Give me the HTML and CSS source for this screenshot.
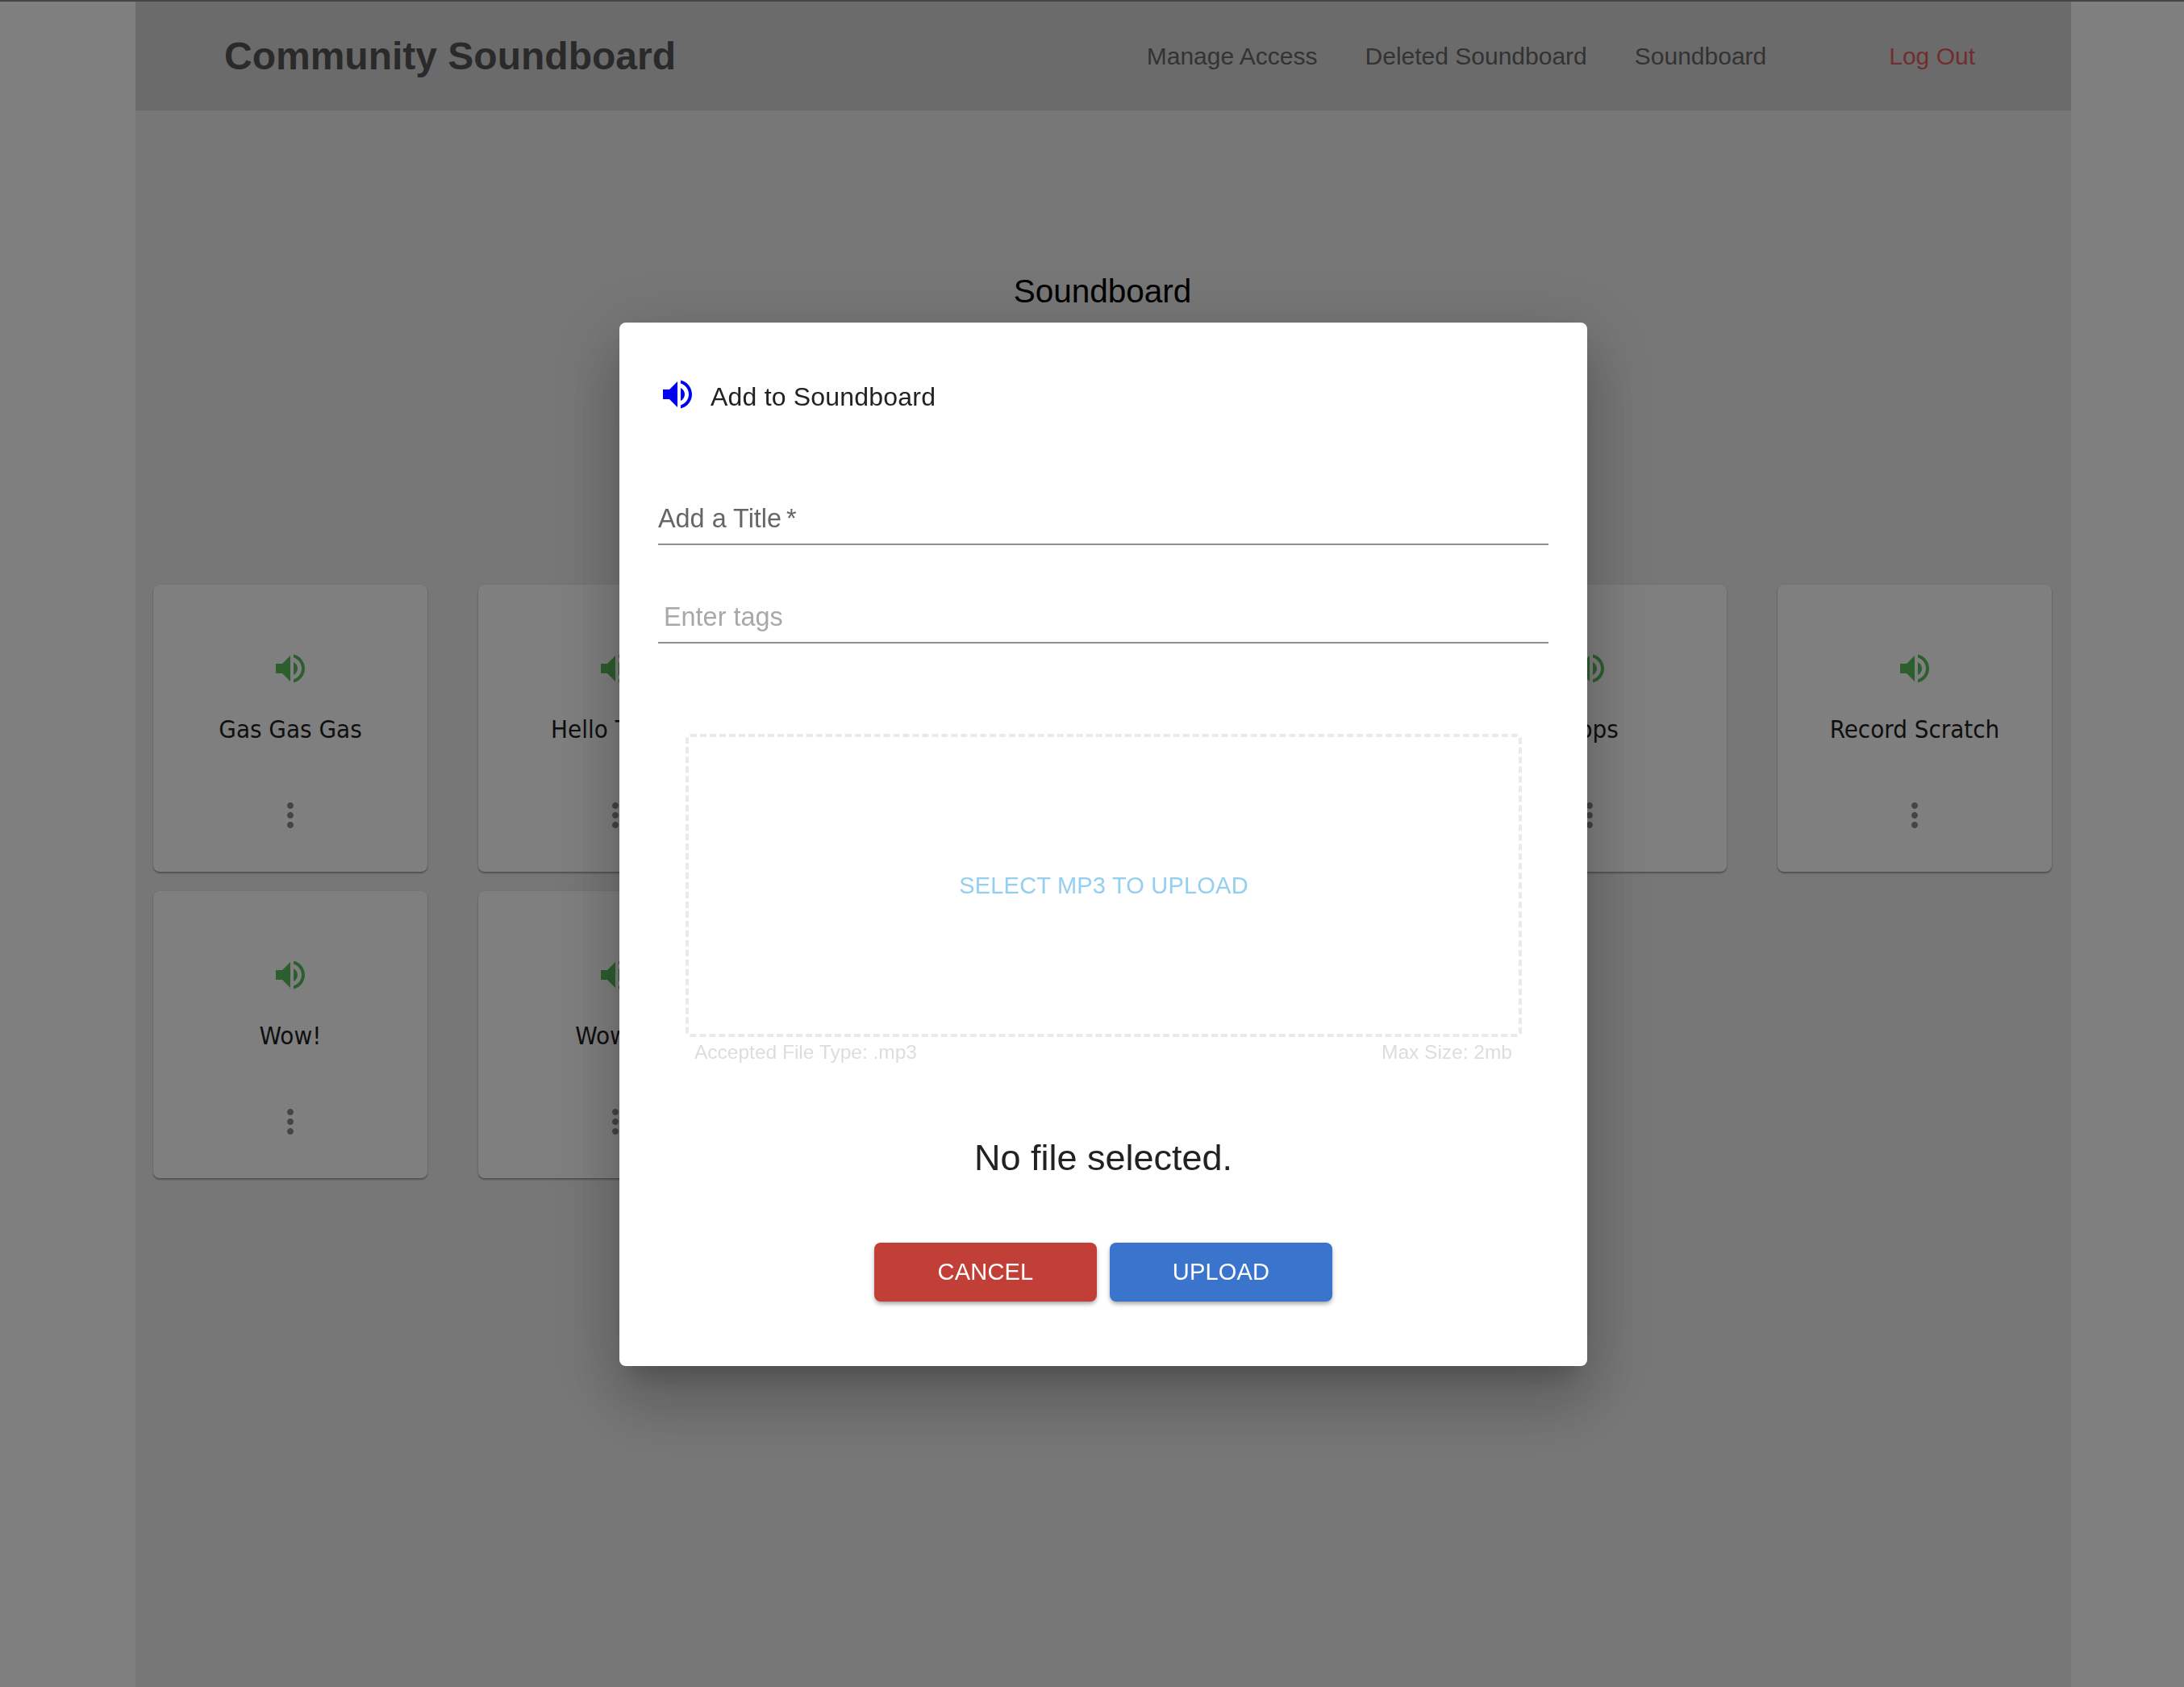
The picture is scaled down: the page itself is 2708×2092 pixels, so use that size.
FILE: index.html
```html
<!DOCTYPE html>
<html lang="en">
<head>
    <meta charset="UTF-8">
    <meta name="viewport" content="width=device-width, initial-scale=1.0">
    <title>Community Soundboard</title>
    <link rel="stylesheet" href="styles.css">
</head>
<body>

    <div class="page">
        <header class="app-bar">
            <div class="brand">Community Soundboard</div>
            <nav class="nav">
                <a class="nav-link">Manage Access</a>
                <a class="nav-link">Deleted Soundboard</a>
                <a class="nav-link">Soundboard</a>
                <a class="nav-link logout">Log Out</a>
            </nav>
        </header>

        <main class="content">
            <h2 class="board-title">Soundboard</h2>

            <div class="sound-grid">
                <div class="sound-card">
                    <svg class="sound-icon" viewBox="0 0 24 24"><path d="M3 9v6h4l5 5V4L7 9H3zm13.5 3c0-1.77-1.02-3.29-2.5-4.03v8.05c1.48-.73 2.5-2.25 2.5-4.02zM14 3.23v2.06c2.89.86 5 3.54 5 6.71s-2.11 5.85-5 6.71v2.06c4.01-.91 7-4.49 7-8.77s-2.99-7.86-7-8.77z"/></svg>
                    <div class="sound-name">Gas Gas Gas</div>
                    <svg class="more-icon" viewBox="0 0 24 24"><path d="M12 8c1.1 0 2-.9 2-2s-.9-2-2-2-2 .9-2 2 .9 2 2 2zm0 2c-1.1 0-2 .9-2 2s.9 2 2 2 2-.9 2-2-.9-2-2-2zm0 6c-1.1 0-2 .9-2 2s.9 2 2 2 2-.9 2-2-.9-2-2-2z"/></svg>
                </div>
                <div class="sound-card">
                    <svg class="sound-icon" viewBox="0 0 24 24"><path d="M3 9v6h4l5 5V4L7 9H3zm13.5 3c0-1.77-1.02-3.29-2.5-4.03v8.05c1.48-.73 2.5-2.25 2.5-4.02zM14 3.23v2.06c2.89.86 5 3.54 5 6.71s-2.11 5.85-5 6.71v2.06c4.01-.91 7-4.49 7-8.77s-2.99-7.86-7-8.77z"/></svg>
                    <div class="sound-name">Hello There</div>
                    <svg class="more-icon" viewBox="0 0 24 24"><path d="M12 8c1.1 0 2-.9 2-2s-.9-2-2-2-2 .9-2 2 .9 2 2 2zm0 2c-1.1 0-2 .9-2 2s.9 2 2 2 2-.9 2-2-.9-2-2-2zm0 6c-1.1 0-2 .9-2 2s.9 2 2 2 2-.9 2-2-.9-2-2-2z"/></svg>
                </div>
                <!-- these two sit fully behind the dialog -->
                <div class="sound-card"></div>
                <div class="sound-card"></div>
                <div class="sound-card">
                    <svg class="sound-icon" viewBox="0 0 24 24"><path d="M3 9v6h4l5 5V4L7 9H3zm13.5 3c0-1.77-1.02-3.29-2.5-4.03v8.05c1.48-.73 2.5-2.25 2.5-4.02zM14 3.23v2.06c2.89.86 5 3.54 5 6.71s-2.11 5.85-5 6.71v2.06c4.01-.91 7-4.49 7-8.77s-2.99-7.86-7-8.77z"/></svg>
                    <div class="sound-name">Oops</div>
                    <svg class="more-icon" viewBox="0 0 24 24"><path d="M12 8c1.1 0 2-.9 2-2s-.9-2-2-2-2 .9-2 2 .9 2 2 2zm0 2c-1.1 0-2 .9-2 2s.9 2 2 2 2-.9 2-2-.9-2-2-2zm0 6c-1.1 0-2 .9-2 2s.9 2 2 2 2-.9 2-2-.9-2-2-2z"/></svg>
                </div>
                <div class="sound-card">
                    <svg class="sound-icon" viewBox="0 0 24 24"><path d="M3 9v6h4l5 5V4L7 9H3zm13.5 3c0-1.77-1.02-3.29-2.5-4.03v8.05c1.48-.73 2.5-2.25 2.5-4.02zM14 3.23v2.06c2.89.86 5 3.54 5 6.71s-2.11 5.85-5 6.71v2.06c4.01-.91 7-4.49 7-8.77s-2.99-7.86-7-8.77z"/></svg>
                    <div class="sound-name">Record Scratch</div>
                    <svg class="more-icon" viewBox="0 0 24 24"><path d="M12 8c1.1 0 2-.9 2-2s-.9-2-2-2-2 .9-2 2 .9 2 2 2zm0 2c-1.1 0-2 .9-2 2s.9 2 2 2 2-.9 2-2-.9-2-2-2zm0 6c-1.1 0-2 .9-2 2s.9 2 2 2 2-.9 2-2-.9-2-2-2z"/></svg>
                </div>
                <div class="sound-card">
                    <svg class="sound-icon" viewBox="0 0 24 24"><path d="M3 9v6h4l5 5V4L7 9H3zm13.5 3c0-1.77-1.02-3.29-2.5-4.03v8.05c1.48-.73 2.5-2.25 2.5-4.02zM14 3.23v2.06c2.89.86 5 3.54 5 6.71s-2.11 5.85-5 6.71v2.06c4.01-.91 7-4.49 7-8.77s-2.99-7.86-7-8.77z"/></svg>
                    <div class="sound-name">Wow!</div>
                    <svg class="more-icon" viewBox="0 0 24 24"><path d="M12 8c1.1 0 2-.9 2-2s-.9-2-2-2-2 .9-2 2 .9 2 2 2zm0 2c-1.1 0-2 .9-2 2s.9 2 2 2 2-.9 2-2-.9-2-2-2zm0 6c-1.1 0-2 .9-2 2s.9 2 2 2 2-.9 2-2-.9-2-2-2z"/></svg>
                </div>
                <div class="sound-card">
                    <svg class="sound-icon" viewBox="0 0 24 24"><path d="M3 9v6h4l5 5V4L7 9H3zm13.5 3c0-1.77-1.02-3.29-2.5-4.03v8.05c1.48-.73 2.5-2.25 2.5-4.02zM14 3.23v2.06c2.89.86 5 3.54 5 6.71s-2.11 5.85-5 6.71v2.06c4.01-.91 7-4.49 7-8.77s-2.99-7.86-7-8.77z"/></svg>
                    <div class="sound-name">Wow!!!</div>
                    <svg class="more-icon" viewBox="0 0 24 24"><path d="M12 8c1.1 0 2-.9 2-2s-.9-2-2-2-2 .9-2 2 .9 2 2 2zm0 2c-1.1 0-2 .9-2 2s.9 2 2 2 2-.9 2-2-.9-2-2-2zm0 6c-1.1 0-2 .9-2 2s.9 2 2 2 2-.9 2-2-.9-2-2-2z"/></svg>
                </div>
            </div>
        </main>
    </div>

    <!-- Add dialog -->
    <div class="overlay">
        <div class="dialog">
            <div class="dialog-title">
                <svg class="dialog-icon" viewBox="0 0 24 24"><path d="M3 9v6h4l5 5V4L7 9H3zm13.5 3c0-1.77-1.02-3.29-2.5-4.03v8.05c1.48-.73 2.5-2.25 2.5-4.02zM14 3.23v2.06c2.89.86 5 3.54 5 6.71s-2.11 5.85-5 6.71v2.06c4.01-.91 7-4.49 7-8.77s-2.99-7.86-7-8.77z"/></svg>
                <span>Add to Soundboard</span>
            </div>

            <div class="field field-title">Add a Title<span class="required">*</span></div>
            <div class="field field-tags">Enter tags</div>

            <div class="dropzone">SELECT MP3 TO UPLOAD</div>
            <div class="dropzone-hints">
                <span>Accepted File Type: .mp3</span>
                <span>Max Size: 2mb</span>
            </div>

            <p class="file-status">No file selected.</p>

            <div class="dialog-actions">
                <button type="button" class="btn btn-cancel">CANCEL</button>
                <button type="button" class="btn btn-upload">UPLOAD</button>
            </div>
        </div>
    </div>

</body>
</html>
```

FILE: styles.css
```css
/* General styling */
body {
    font-family: "Liberation Sans", Arial, sans-serif;
    background-color: #fff;
    margin: 0;
    padding: 0;
    min-height: 100vh;
    box-sizing: border-box;
    border-top: 2px solid #888;
}

.page {
    width: 2400px;
    margin-left: 168px;
    min-height: 2090px;
    background-color: #eee;
}

/* App bar */
.app-bar {
    height: 135px;
    background-color: #d7d7d7;
    display: flex;
    align-items: center;
    justify-content: space-between;
    padding: 0 119px 0 110px;
    box-sizing: border-box;
}

.brand {
    font-size: 48px;
    font-weight: bold;
    color: #555;
}

.nav {
    display: flex;
    align-items: center;
    gap: 59px;
    font-size: 30px;
    color: #666;
}

.logout {
    color: #e25c5c;
    margin-left: 93px;
}

/* Sound cards */
.content {
    padding: 0 24px 0 22px;
}

.board-title {
    margin: 0;
    padding-top: 200px;
    height: 588px;
    box-sizing: border-box;
    text-align: center;
    font-size: 40.5px;
    line-height: 48px;
    font-weight: normal;
    color: #000;
}

.sound-grid {
    display: grid;
    grid-template-columns: repeat(6, 340px);
    justify-content: space-between;
    row-gap: 24px;
}

.sound-card {
    height: 356px;
    padding-top: 80px;
    box-sizing: border-box;
    background-color: #fff;
    border-radius: 8px;
    box-shadow: 0 2px 2px rgba(0, 0, 0, 0.3), 0 0 2px rgba(0, 0, 0, 0.1);
    display: flex;
    flex-direction: column;
    align-items: center;
}

.sound-icon {
    width: 48px;
    height: 48px;
    fill: #5abc5c;
}

.sound-name {
    margin-top: 27px;
    font-family: "DejaVu Sans Condensed", "DejaVu Sans", sans-serif;
    font-size: 31px;
    line-height: 48px;
    color: #1e1e1e;
}

.more-icon {
    width: 48px;
    height: 48px;
    margin-top: 59px;
    fill: #8a8a8a;
}

/* Dialog */
.overlay {
    position: fixed;
    top: 0;
    left: 0;
    right: 0;
    bottom: 0;
    background-color: rgba(0, 0, 0, 0.5);
    display: flex;
    align-items: center;
    justify-content: center;
    padding: 2px 0 0 28px;
    box-sizing: border-box;
}

.dialog {
    width: 1200px;
    height: 1294px;
    box-sizing: border-box;
    padding: 0 48px;
    background-color: #fff;
    border-radius: 8px;
    box-shadow: 0 22px 30px -14px rgba(0, 0, 0, 0.2), 0 48px 76px 6px rgba(0, 0, 0, 0.14), 0 18px 92px 16px rgba(0, 0, 0, 0.12);
}

.dialog-title {
    display: flex;
    align-items: center;
    gap: 17px;
    padding-top: 64px;
    height: 56px;
    font-size: 32px;
    letter-spacing: 0.2px;
    color: #222;
}

.dialog-icon {
    width: 48px;
    height: 48px;
    fill: #0000f0;
    position: relative;
    top: -3px;
}

.field {
    border-bottom: 2px solid #8f8f8f;
    font-size: 32.4px;
    line-height: 40px;
    box-sizing: border-box;
}

.field-title {
    margin-top: 102px;
    height: 54px;
    padding-top: 1px;
    color: #666;
}

.required {
    margin-left: 6px;
}

.field-tags {
    margin-top: 63px;
    height: 59px;
    padding: 6px 0 0 7px;
    color: #a8a8a8;
}

.dropzone {
    margin: 112px 33px 0 34px;
    height: 376px;
    box-sizing: border-box;
    border: 4px dashed #eaeaea;
    border-radius: 6px;
    display: flex;
    align-items: center;
    justify-content: center;
    font-size: 29px;
    letter-spacing: 0.2px;
    color: #95cff0;
}

.dropzone-hints {
    display: flex;
    justify-content: space-between;
    margin: 2px 45px 0;
    font-size: 24.5px;
    line-height: 34px;
    color: #ddd;
}

.file-status {
    margin: 84px 0 0;
    text-align: center;
    font-size: 45px;
    line-height: 60px;
    color: #222;
}

.dialog-actions {
    display: flex;
    justify-content: center;
    gap: 16px;
    margin-top: 75px;
}

.btn {
    width: 276px;
    height: 73px;
    border: none;
    border-radius: 8px;
    color: #fff;
    font-family: "Liberation Sans", Arial, sans-serif;
    font-size: 29px;
    letter-spacing: 0.2px;
    box-shadow: 0 4px 6px -2px rgba(0, 0, 0, 0.35), 0 2px 6px rgba(0, 0, 0, 0.12);
}

.btn-cancel {
    background-color: #c23f37;
}

.btn-upload {
    background-color: #3a74cd;
}
```
